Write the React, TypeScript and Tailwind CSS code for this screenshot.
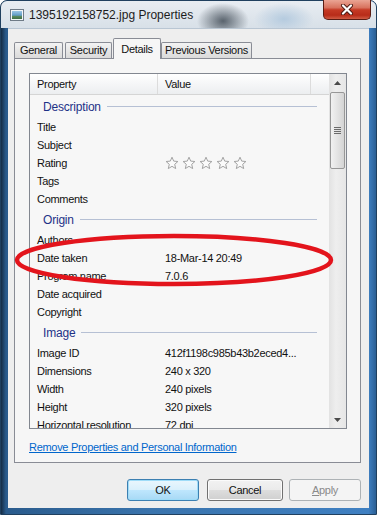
import React from 'react'

const groups: { name: string; rows: [string, string][] }[] = [
  {
    name: 'Description',
    rows: [['Title', ''], ['Subject', ''], ['Rating', '*'], ['Tags', ''], ['Comments', '']],
  },
  {
    name: 'Origin',
    rows: [['Authors', ''], ['Date taken', '18-Mar-14 20:49'], ['Program name', '7.0.6'], ['Date acquired', ''], ['Copyright', '']],
  },
  {
    name: 'Image',
    rows: [
      ['Image ID', '412f1198c985b43b2eced4...'],
      ['Dimensions', '240 x 320'],
      ['Width', '240 pixels'],
      ['Height', '320 pixels'],
      ['Horizontal resolution', '72 dpi'],
    ],
  },
]

const Star = () => (
  <svg width="14" height="14" viewBox="0 0 14 14">
    <path
      d="M7 1.2 L8.7 5.1 L12.9 5.5 L9.7 8.3 L10.7 12.6 L7 10.3 L3.3 12.6 L4.3 8.3 L1.1 5.5 L5.3 5.1 Z"
      fill="#fbfbfb"
      stroke="#a3a3a3"
      strokeWidth="1"
      strokeLinejoin="round"
    />
  </svg>
)

const Arrow = ({ down }: { down?: boolean }) => (
  <svg width="7" height="4" viewBox="0 0 7 4">
    <path d={down ? 'M0 0 H7 L3.5 4 Z' : 'M0 4 H7 L3.5 0 Z'} fill="#4a4a4a" />
  </svg>
)

const Tab = ({ label, selected, w }: { label: string; selected?: boolean; w: string }) => (
  <div
    className={
      selected
        ? `${w} h-[21px] -mb-px relative z-10 flex items-start justify-center pt-[2px] border border-b-0 border-[#898c95] bg-[#f6f6f6] rounded-t-[2px]`
        : `${w} h-[16px] flex items-center justify-center border border-b-0 border-[#898c95] bg-[linear-gradient(#f3f3f3,#e6e6e6_50%,#dadada)] rounded-t-[2px]`
    }
  >
    {label}
  </div>
)

export default function App() {
  return (
    <div className="relative w-[377px] h-[515px] overflow-hidden bg-white font-['Liberation_Sans',Arial,sans-serif] text-[11px] tracking-[-0.3px] text-[#111]">
      <div className="w-[377px] h-[515px] flex flex-col rounded-t-[7px] border border-[#20405f] bg-[linear-gradient(90deg,#152c44_0px,#2a5b8c_5px,#3a74ad_40%,#3f80c2_98%,#2b5f94_100%)]">
        {/* title bar */}
        <div className="h-[27px] flex items-center pl-[9px] rounded-t-[6px] bg-[radial-gradient(ellipse_26px_18px_at_222px_20px,#59636d,transparent),radial-gradient(ellipse_30px_16px_at_283px_18px,#b5cbdf,transparent),linear-gradient(#e8edf2,#d8e0e8)]">
          <svg width="14" height="12" viewBox="0 0 14 12">
            <defs>
              <linearGradient id="pic" x1="0" y1="0" x2="0" y2="1">
                <stop offset="0" stopColor="#9cc6e4" />
                <stop offset="0.55" stopColor="#5f9ac4" />
                <stop offset="0.6" stopColor="#5f8f63" />
                <stop offset="1" stopColor="#3e6e45" />
              </linearGradient>
            </defs>
            <rect x="0.5" y="0.5" width="13" height="11" fill="#f4f6f8" stroke="#6f7b87" />
            <rect x="2" y="2" width="10" height="8" fill="url(#pic)" />
          </svg>
          <span className="ml-[5px] text-[12px] tracking-normal text-[#1c1c1c]">1395192158752.jpg Properties</span>
          <div
            className="ml-auto mr-[5px] self-start -mt-px w-[48px] h-[20px] flex items-center justify-center rounded-b-[5px] border border-t-0 border-[#5a1d14] bg-[linear-gradient(#eaa594,#d8735f_40%,#c53a25_52%,#b82c19_80%,#d05c44)]"
          >
            <svg width="14" height="11" viewBox="0 0 14 11">
              <path d="M3 1.5 L11 9.5 M11 1.5 L3 9.5" stroke="#4b1a12" strokeWidth="4" strokeLinecap="round" />
              <path d="M3 1.5 L11 9.5 M11 1.5 L3 9.5" stroke="#ffffff" strokeWidth="2.2" strokeLinecap="round" />
            </svg>
          </div>
        </div>

        {/* client */}
        <div className="mx-[7px] h-[480px] flex flex-col border-t border-[#b9c6d3] bg-[#eeeeee]">
          <div className="mt-[8px] ml-[6px] h-[21px] flex items-end">
            <Tab label="General" w="w-[49px]" />
            <div className="ml-[2px]">
              <Tab label="Security" w="w-[47px]" />
            </div>
            <div className="ml-[1px]">
              <Tab label="Details" selected w="w-[48px]" />
            </div>
            <Tab label="Previous Versions" w="w-[91px]" />
          </div>

          <div className="ml-[6px] mr-[8px] h-[405px] flex flex-col border border-[#898c95] bg-[#f6f6f6] pt-[14px] pl-[14px]">
            {/* list view */}
            <div className="w-[318px] h-[356px] flex border border-[#828790] bg-[#f7f7f7]">
              <div className="flex-1 flex flex-col overflow-hidden">
                <div className="h-[21px] shrink-0 flex border-b border-[#d5d5d5] bg-[linear-gradient(#ffffff,#f6f7f8_45%,#eceef0)]">
                  <div className="w-[128px] pl-[7px] flex items-center border-r border-[#dcdcdc]">Property</div>
                  <div className="w-[153px] pl-[7px] flex items-center border-r border-[#dcdcdc]">Value</div>
                </div>
                {groups.map((g) => (
                  <div key={g.name} className="shrink-0">
                    <div className="h-[23px] flex items-center pl-[13px] pr-[12px]">
                      <span className="text-[#1e3287] text-[12px] tracking-[-0.2px]">{g.name}</span>
                      <div className="flex-1 ml-[6px] h-px bg-[#b6c0d4]" />
                    </div>
                    {g.rows.map(([k, v]) => (
                      <div key={k} className="h-[18px] flex items-center">
                        <div className="w-[128px] pl-[7px] whitespace-nowrap">{k}</div>
                        <div className="pl-[7px] flex items-center">
                          {v === '*' ? (
                            <div className="flex gap-[3px]">
                              <Star />
                              <Star />
                              <Star />
                              <Star />
                              <Star />
                            </div>
                          ) : (
                            v
                          )}
                        </div>
                      </div>
                    ))}
                  </div>
                ))}
              </div>
              {/* scrollbar */}
              <div className="w-[17px] flex flex-col bg-[linear-gradient(90deg,#e2e2e2,#eeeeee_40%,#e6e6e6)]">
                <div className="h-[17px] flex items-center justify-center">
                  <Arrow />
                </div>
                <div className="mt-[1px] mx-[1px] h-[77px] flex items-center justify-center rounded-[2px] border border-[#979797] bg-[linear-gradient(90deg,#f1f1f1,#e3e3e3_50%,#d4d4d4)]">
                  <div className="flex flex-col gap-[1px]">
                    <div className="w-[7px] h-px bg-[#6b6b6b]" />
                    <div className="w-[7px] h-px bg-[#6b6b6b]" />
                    <div className="w-[7px] h-px bg-[#6b6b6b]" />
                    <div className="w-[7px] h-px bg-[#6b6b6b]" />
                  </div>
                </div>
                <div className="flex-1" />
                <div className="h-[17px] flex items-center justify-center">
                  <Arrow down />
                </div>
              </div>
            </div>
            <div className="mt-[11px] leading-[14px] text-[#0066cc] underline">Remove Properties and Personal Information</div>
          </div>

          {/* buttons */}
          <div className="mt-[16px] mr-[8px] flex justify-end">
            <div className="w-[72px] h-[22px] flex items-center justify-center rounded-[3px] border border-[#3c7fb1] bg-[linear-gradient(#eaf6fd,#d9f0fc_48%,#bee6fd_52%,#a7d9f5)] shadow-[inset_0_0_0_1px_#9fdcf8]">
              OK
            </div>
            <div className="ml-[8px] w-[76px] h-[22px] flex items-center justify-center rounded-[3px] border border-[#707070] bg-[linear-gradient(#f2f2f2,#ebebeb_48%,#dddddd_52%,#cfcfcf)] shadow-[inset_0_0_0_1px_#fbfbfb]">
              Cancel
            </div>
            <div className="ml-[6px] w-[72px] h-[22px] flex items-center justify-center rounded-[3px] border border-[#adb2b5] bg-[#f4f4f4] text-[#8a8a8a]">
              <span>
                <span className="underline">A</span>pply
              </span>
            </div>
          </div>
        </div>
      </div>

      {/* red annotation */}
      <svg className="absolute left-0 top-0 pointer-events-none" width="377" height="515" viewBox="0 0 377 515">
        <ellipse cx="174" cy="260" rx="157" ry="24" fill="none" stroke="#e3141c" strokeWidth="4.5" />
      </svg>
    </div>
  )
}
